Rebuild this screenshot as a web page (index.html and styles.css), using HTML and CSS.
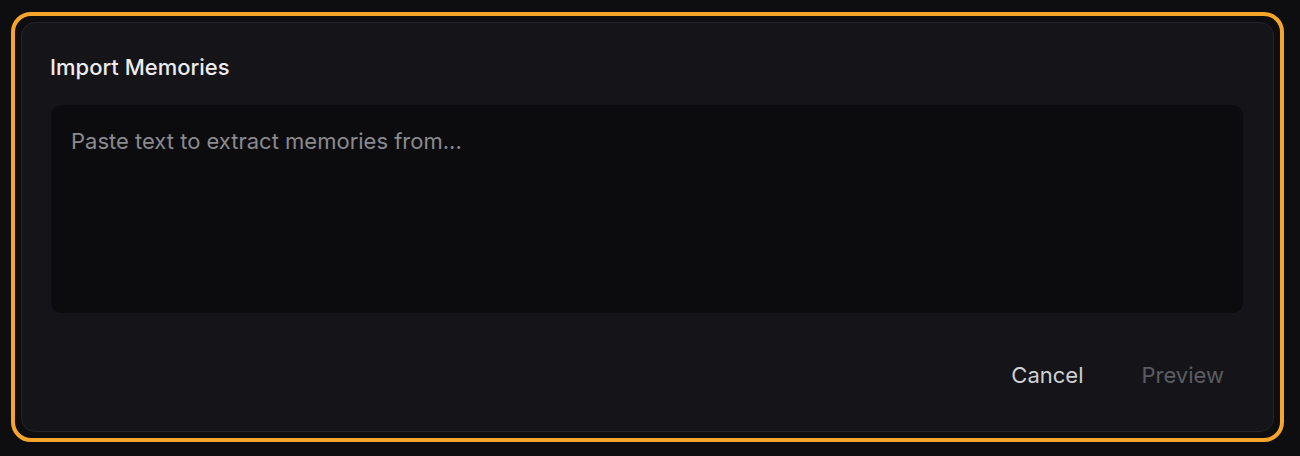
FILE: index.html
```html
<!DOCTYPE html>
<html>
<head>
<meta charset="utf-8">
<link rel="stylesheet" href="styles.css">
</head>
<body>
<div class="ring">
  <div class="card">
    <h2 class="title">Import Memories</h2>
    <div class="textarea"><span class="placeholder">Paste text to extract memories from...</span></div>
    <div class="actions">
      <button class="btn btn-cancel">Cancel</button>
      <button class="btn btn-preview">Preview</button>
    </div>
  </div>
</div>
</body>
</html>
```

FILE: styles.css
```css
html, body {
  margin: 0;
  padding: 0;
  background: #0e0e11;
  font-family: Inter, "Noto Sans", sans-serif;
}
body {
  padding: 12px 16px 15px 11px;
}
.ring {
  border: 4px solid #f4a52a;
  border-radius: 20px;
  padding: 6px;
  height: 430px;
  box-sizing: border-box;
}
.card {
  height: 100%;
  box-sizing: border-box;
  background: #151519;
  border: 1px solid #24252a;
  border-radius: 14px;
  padding: 31px 30px 0 28px;
  display: flex;
  flex-direction: column;
}
.title {
  margin: 0;
  font-size: 22px;
  line-height: 26px;
  font-weight: 500;
  color: #ececee;
}
.textarea {
  margin-top: 25px;
  margin-left: 1px;
  height: 208px;
  background: #0c0c0f;
  border-radius: 10px;
  padding: 23px 20px;
  box-sizing: border-box;
}
.placeholder {
  font-size: 22px;
  line-height: 26px;
  color: #8a8a8f;
}
.actions {
  display: flex;
  justify-content: flex-end;
  gap: 18px;
  margin-top: 43px;
  margin-right: -1px;
}
.btn {
  background: none;
  border: none;
  font-family: inherit;
  font-size: 22px;
  line-height: 26px;
  padding: 6px 20px;
  cursor: pointer;
}
.btn-cancel {
  color: #cfd0d4;
}
.btn-preview {
  color: #5c5c62;
}
```
